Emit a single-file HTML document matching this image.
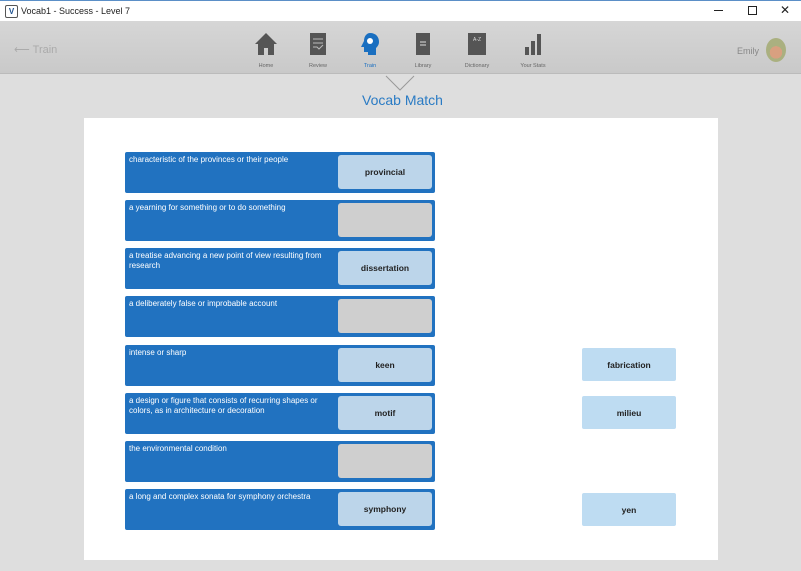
<!DOCTYPE html>
<html><head><style>
body{margin:0;width:801px;height:571px;overflow:hidden;background:#dedede;font-family:"Liberation Sans",sans-serif;position:relative}
.abs{position:absolute}
#title{left:0;top:0;width:801px;height:21px;background:#fff;border-top:1px solid #5b8fc7;box-sizing:border-box}
#tb{left:0;top:21px;width:801px;height:52px;background:linear-gradient(#d6d6d6,#c9c9c9);border-bottom:1px solid #bbb}
.nav{position:absolute;top:11px;width:50px;text-align:center;font-size:5.5px;color:#666}
.nav svg{display:block;margin:0 auto 7px}
.row{position:absolute;left:125px;width:310px;height:41px;background:#2172c0;border-radius:2px}
.row .t{position:absolute;left:4px;top:3px;width:205px;color:#fff;font-size:8px;line-height:10px}
.row .b{position:absolute;left:213px;top:3px;width:94px;height:34px;border-radius:3px;font-size:8.5px;font-weight:bold;color:#222;display:flex;align-items:center;justify-content:center}
.f{background:#bcd5ea}.e{background:#cfcfcf}
.chip{position:absolute;left:582px;width:94px;height:33px;background:#bedcf2;border-radius:2px;font-size:8.5px;font-weight:bold;color:#222;display:flex;align-items:center;justify-content:center}
</style></head><body>
<div id="title" class="abs">
<div class="abs" style="left:5px;top:4px;width:11px;height:11px;border:1px solid #555;border-radius:2px;font-size:8px;text-align:center;line-height:11px;font-weight:bold;color:#1a4f8f">V</div>
<div class="abs" style="left:21px;top:5px;font-size:9px;color:#222">Vocab1 - Success - Level 7</div>
<div class="abs" style="left:714px;top:9px;width:9px;height:1px;background:#222"></div>
<div class="abs" style="left:748px;top:5px;width:7px;height:7px;border:1px solid #222"></div>
<div class="abs" style="left:780px;top:2px;font-size:12px;color:#222">✕</div>
</div>
<div id="tb" class="abs">
<div class="abs" style="left:14px;top:22px;font-size:11px;color:#aaa">⟵ Train</div>
<div class="nav" style="left:241px"><svg width="24" height="24"><path d="M12 1L1 12h3v11h6v-7h4v7h6V12h3z" fill="#555"/></svg>Home</div>
<div class="nav" style="left:293px"><svg width="24" height="24"><rect x="4" y="1" width="16" height="22" fill="#555"/><path d="M7 7h10M7 11h10M7 15h4l2 2 4-4" stroke="#bbb" fill="none"/></svg>Review</div>
<div class="nav" style="left:345px;color:#1a6fc0"><svg width="24" height="24"><path d="M12 1c6 0 9 4 9 9 0 3-2 5-3 6v7h-8v-3H6v-5H3l3-6c0-5 3-8 6-8z" fill="#1a6fc0"/><circle cx="12" cy="9" r="3" fill="#fff"/></svg>Train</div>
<div class="nav" style="left:398px"><svg width="24" height="24"><rect x="5" y="1" width="14" height="22" fill="#555"/><path d="M9 10h6M9 13h6" stroke="#ddd"/></svg>Library</div>
<div class="nav" style="left:452px"><svg width="24" height="24"><rect x="3" y="1" width="18" height="22" fill="#555"/><text x="8" y="9" font-size="5" fill="#ddd">A-Z</text></svg>Dictionary</div>
<div class="nav" style="left:508px"><svg width="24" height="24"><rect x="4" y="15" width="4" height="8" fill="#555"/><rect x="10" y="9" width="4" height="14" fill="#555"/><rect x="16" y="2" width="4" height="21" fill="#555"/></svg>Your Stats</div>
<div class="abs" style="left:737px;top:25px;font-size:9px;color:#888">Emily</div>
<div class="abs" style="left:766px;top:17px;width:20px;height:24px;border-radius:50%;background:radial-gradient(circle at 50% 60%,#d8a080 35%,#aab080 36%)"></div>
</div>
<svg class="abs" style="left:385px;top:74px" width="30" height="20"><path d="M1 2l14 14 14-14" stroke="#999" fill="none"/></svg>
<div class="abs" style="left:362px;top:92px;font-size:14px;color:#2a7bc4">Vocab Match</div>
<div class="abs" style="left:84px;top:118px;width:634px;height:442px;background:#fff"></div>
<div class="row" style="top:152px"><div class="t">characteristic of the provinces or their people</div><div class="b f">provincial</div></div>
<div class="row" style="top:200px"><div class="t">a yearning for something or to do something</div><div class="b e"></div></div>
<div class="row" style="top:248px"><div class="t">a treatise advancing a new point of view resulting from research</div><div class="b f">dissertation</div></div>
<div class="row" style="top:296px"><div class="t">a deliberately false or improbable account</div><div class="b e"></div></div>
<div class="row" style="top:345px"><div class="t">intense or sharp</div><div class="b f">keen</div></div>
<div class="row" style="top:393px"><div class="t">a design or figure that consists of recurring shapes or colors, as in architecture or decoration</div><div class="b f">motif</div></div>
<div class="row" style="top:441px"><div class="t">the environmental condition</div><div class="b e"></div></div>
<div class="row" style="top:489px"><div class="t">a long and complex sonata for symphony orchestra</div><div class="b f">symphony</div></div>
<div class="chip" style="top:348px">fabrication</div>
<div class="chip" style="top:396px">milieu</div>
<div class="chip" style="top:493px">yen</div>
</body></html>
